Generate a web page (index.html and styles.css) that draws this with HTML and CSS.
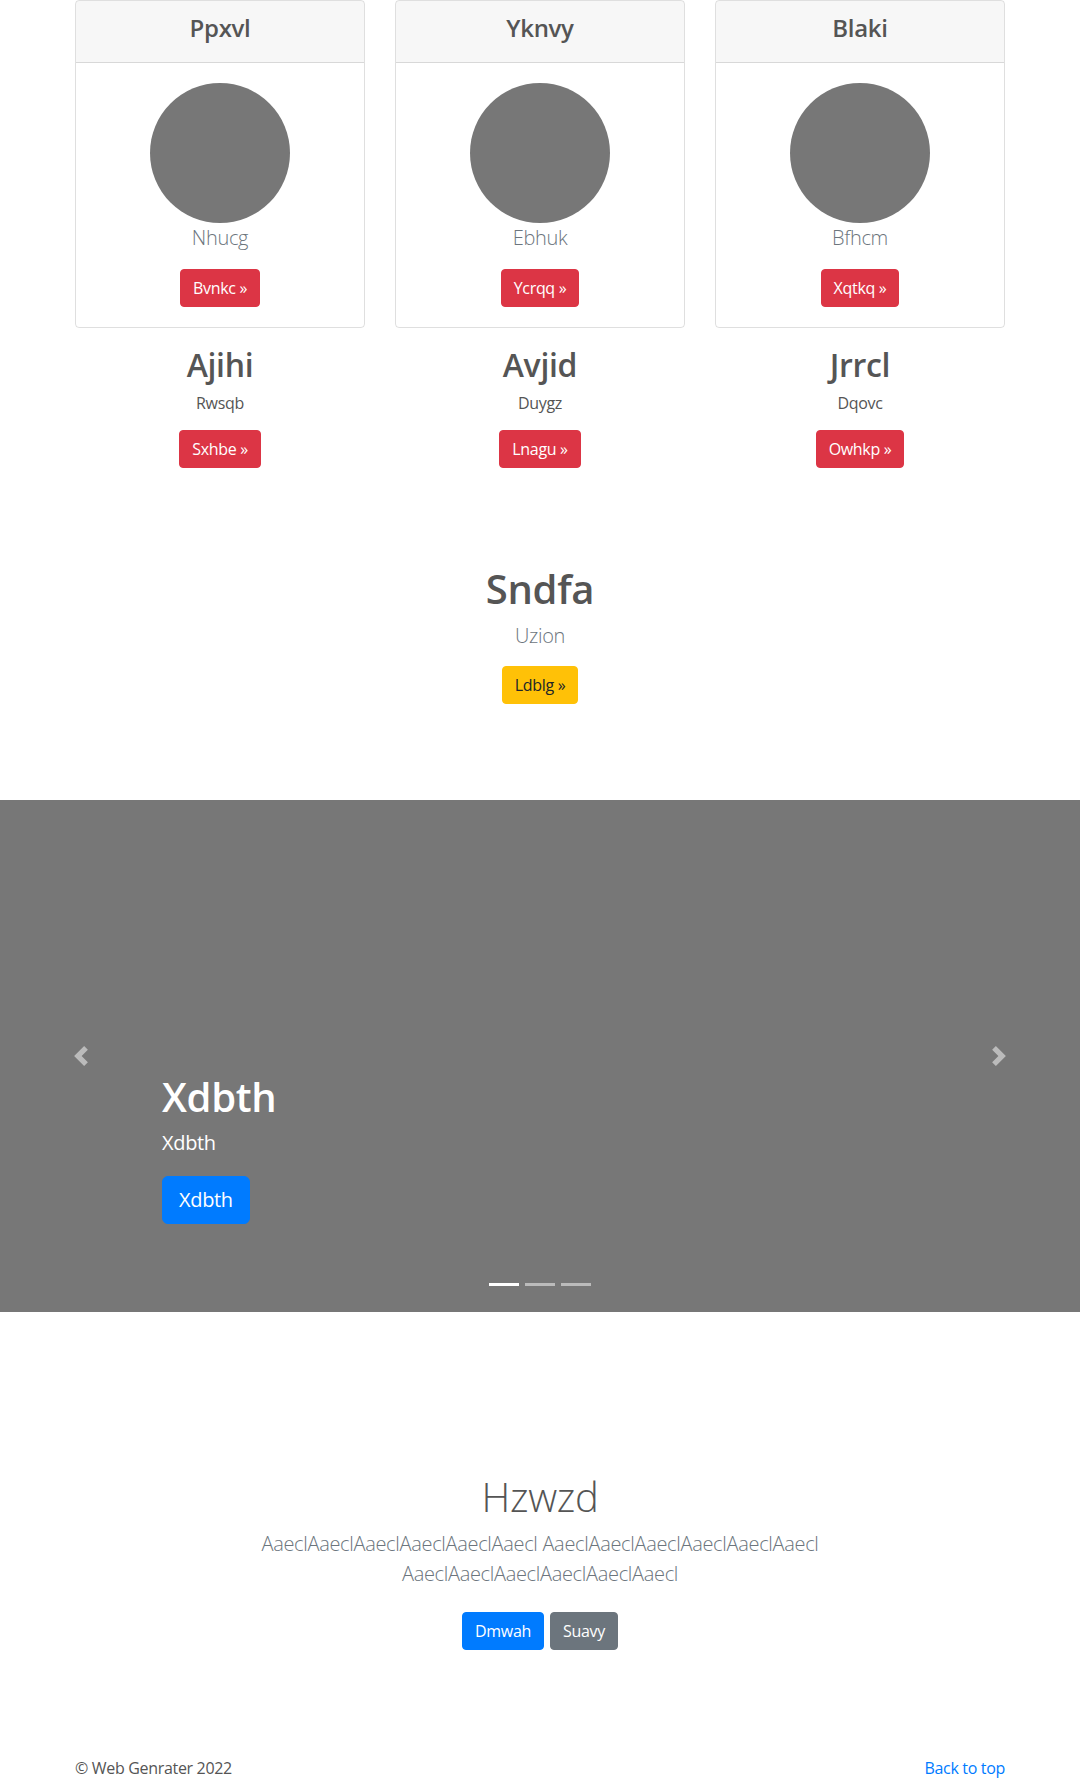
FILE: index.html
```html
<!DOCTYPE html>
<html lang="en">
<head>
<meta charset="utf-8">
<title>Web Genrater</title>
<link rel="stylesheet" href="styles.css">
</head>
<body>
<main>
  <div class="container">
    <div class="grid3 cards">
      <div class="card">
        <div class="card-header"><h4>Ppxvl</h4></div>
        <div class="card-body">
          <svg class="avatar" width="140" height="140" viewBox="0 0 140 140"><circle cx="70" cy="70" r="70" fill="#777"/></svg>
          <p class="lead muted">Nhucg</p>
          <div class="actions"><a class="btn btn-danger" href="#">Bvnkc »</a></div>
        </div>
      </div>
      <div class="card">
        <div class="card-header"><h4>Yknvy</h4></div>
        <div class="card-body">
          <svg class="avatar" width="140" height="140" viewBox="0 0 140 140"><circle cx="70" cy="70" r="70" fill="#777"/></svg>
          <p class="lead muted">Ebhuk</p>
          <div class="actions"><a class="btn btn-danger" href="#">Ycrqq »</a></div>
        </div>
      </div>
      <div class="card">
        <div class="card-header"><h4>Blaki</h4></div>
        <div class="card-body">
          <svg class="avatar" width="140" height="140" viewBox="0 0 140 140"><circle cx="70" cy="70" r="70" fill="#777"/></svg>
          <p class="lead muted">Bfhcm</p>
          <div class="actions"><a class="btn btn-danger" href="#">Xqtkq »</a></div>
        </div>
      </div>
    </div>

    <div class="grid3 marketing">
      <div class="mk">
        <h2>Ajihi</h2>
        <p>Rwsqb</p>
        <div class="actions"><a class="btn btn-danger" href="#">Sxhbe »</a></div>
      </div>
      <div class="mk">
        <h2>Avjid</h2>
        <p>Duygz</p>
        <div class="actions"><a class="btn btn-danger" href="#">Lnagu »</a></div>
      </div>
      <div class="mk">
        <h2>Jrrcl</h2>
        <p>Dqovc</p>
        <div class="actions"><a class="btn btn-danger" href="#">Owhkp »</a></div>
      </div>
    </div>
  </div>

  <section class="feature">
    <h1>Sndfa</h1>
    <p class="lead muted">Uzion</p>
    <div class="actions"><a class="btn btn-warning" href="#">Ldblg »</a></div>
  </section>

  <div class="carousel">
    <div class="caption">
      <h1>Xdbth</h1>
      <p>Xdbth</p>
      <div><a class="btn btn-lg btn-primary" href="#">Xdbth</a></div>
    </div>
    <a class="control control-prev" href="#" aria-label="Previous">
      <svg width="20" height="20" viewBox="0 0 8 8"><path fill="#fff" d="M5.25 0l-4 4 4 4 1.5-1.5L4.25 4l2.5-2.5L5.25 0z"/></svg>
    </a>
    <a class="control control-next" href="#" aria-label="Next">
      <svg width="20" height="20" viewBox="0 0 8 8"><path fill="#fff" d="M2.75 0l-1.5 1.5L3.75 4l-2.5 2.5L2.75 8l4-4-4-4z"/></svg>
    </a>
    <div class="indicators">
      <span class="ind active"></span>
      <span class="ind"></span>
      <span class="ind"></span>
    </div>
  </div>

  <section class="album">
    <div class="album-inner">
      <h1>Hzwzd</h1>
      <p class="lead muted">AaeclAaeclAaeclAaeclAaeclAaecl AaeclAaeclAaeclAaeclAaeclAaecl AaeclAaeclAaeclAaeclAaeclAaecl</p>
      <div class="actions album-actions">
        <a class="btn btn-primary" href="#">Dmwah</a>
        <a class="btn btn-secondary" href="#">Suavy</a>
      </div>
    </div>
  </section>
</main>

<footer class="container footer">
  <p>© Web Genrater 2022</p>
  <p><a class="top-link" href="#">Back to top</a></p>
</footer>
</body>
</html>
```

FILE: styles.css
```css
* {
  box-sizing: border-box;
}

html,
body {
  margin: 0;
  padding: 0;
}

body {
  font-family: "Open Sans", "Noto Sans", "Liberation Sans", sans-serif;
  font-size: 16px;
  line-height: 1.5;
  letter-spacing: -0.02em;
  color: #555;
  background: #fff;
}

h1,
h2,
h4,
p {
  margin: 0;
}

.container {
  max-width: 960px;
  margin: 0 auto;
  padding: 0 15px;
}

.grid3 {
  display: grid;
  grid-template-columns: repeat(3, 1fr);
  column-gap: 30px;
}

/* cards */
.card {
  border: 1px solid rgba(0, 0, 0, 0.125);
  border-radius: 4px;
  text-align: center;
  overflow: hidden;
}

.card-header {
  background: rgba(0, 0, 0, 0.03);
  border-bottom: 1px solid rgba(0, 0, 0, 0.125);
  padding: 13px 20px 12px;
}

.card-header h4 {
  font-size: 24px;
  line-height: 28.8px;
  font-weight: 600;
  margin-bottom: 7px;
}

.card-body {
  padding: 20px;
}

.avatar {
  display: block;
  margin: 0 auto;
}

.lead {
  font-size: 20px;
  line-height: 30px;
  font-weight: 300;
}

.muted {
  color: #6c757d;
}

.card-body .lead {
  margin-bottom: 16px;
}

.actions {
  display: flex;
  justify-content: center;
  gap: 6px;
}

/* buttons */
.btn {
  display: inline-block;
  padding: 6px 12px;
  font-size: 16px;
  line-height: 24px;
  border: 1px solid transparent;
  border-radius: 4px;
  text-decoration: none;
  color: #fff;
  white-space: nowrap;
}

.btn-danger {
  background: #dc3545;
  border-color: #dc3545;
}

.btn-warning {
  background: #ffc107;
  border-color: #ffc107;
  color: #212529;
}

.btn-primary {
  background: #007bff;
  border-color: #007bff;
}

.btn-secondary {
  background: #6c757d;
  border-color: #6c757d;
}

.btn-lg {
  padding: 8px 16px;
  font-size: 20px;
  line-height: 30px;
  border-radius: 6px;
}

/* marketing */
.marketing {
  margin-top: 18px;
}

.mk {
  text-align: center;
}

.mk h2 {
  font-size: 32px;
  line-height: 38.4px;
  font-weight: 600;
  margin-bottom: 7px;
}

.mk p {
  margin-bottom: 15px;
}

/* feature */
.feature {
  text-align: center;
  padding: 97px 15px 96px;
}

.feature h1 {
  font-size: 40px;
  line-height: 48px;
  font-weight: 600;
  margin-bottom: 8px;
}

.feature .lead {
  margin-bottom: 15px;
}

/* carousel */
.carousel {
  position: relative;
  height: 512px;
  background: #777;
  display: flex;
  align-items: flex-end;
  padding: 0 15% 88px;
}

.caption {
  color: #fff;
}

.caption h1 {
  font-size: 40px;
  line-height: 48px;
  font-weight: 600;
  margin-bottom: 7px;
}

.caption p {
  font-size: 20px;
  line-height: 30px;
  margin-bottom: 18px;
}

.control {
  position: absolute;
  top: 0;
  bottom: 0;
  width: 15%;
  display: flex;
  align-items: center;
  justify-content: center;
  opacity: 0.5;
}

.control-prev {
  left: 0;
}

.control-next {
  right: 0;
}

.indicators {
  position: absolute;
  left: 0;
  right: 0;
  bottom: 26px;
  display: flex;
  justify-content: center;
  gap: 6px;
}

.ind {
  display: block;
  width: 30px;
  height: 3px;
  background: rgba(255, 255, 255, 0.5);
}

.ind.active {
  background: #fff;
}

/* album */
.album {
  text-align: center;
  padding: 161px 15px 0;
}

.album-inner {
  max-width: 640px;
  margin: 0 auto;
  padding: 0 15px;
}

.album h1 {
  font-size: 40px;
  line-height: 48px;
  font-weight: 300;
  margin-bottom: 8px;
}

.album .lead {
  margin-bottom: 16px;
}

.album-actions {
  padding: 7px 0 8px;
}

/* footer */
.footer {
  display: flex;
  justify-content: space-between;
  margin-top: 98px;
}

.top-link {
  color: #007bff;
  text-decoration: none;
}
```
